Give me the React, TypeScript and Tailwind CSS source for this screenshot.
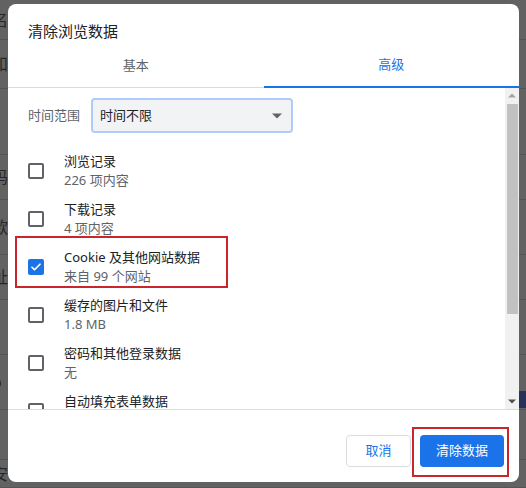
import React from "react";

type Item = { title: string; sub: string; checked?: boolean };

const items: Item[] = [
  { title: "浏览记录", sub: "226 项内容" },
  { title: "下载记录", sub: "4 项内容" },
  { title: "Cookie 及其他网站数据", sub: "来自 99 个网站", checked: true },
  { title: "缓存的图片和文件", sub: "1.8 MB" },
  { title: "密码和其他登录数据", sub: "无" },
  { title: "自动填充表单数据", sub: "" },
];

// rows of the dimmed page behind the dialog
const bgRows = [
  { h: "h-[40px]", text: "名" },
  { h: "h-[49px]", text: "和" },
  { h: "h-[66px]", text: "" },
  { h: "h-[45px]", text: "码" },
  { h: "h-[55px]", text: "款" },
  { h: "h-[45px]", text: "址" },
  { h: "h-[55px]", text: "" },
  { h: "h-[55px]", text: "o", blue: true },
  { h: "h-[50px]", text: "" },
  { h: "h-[28px]", text: "安" },
];

const Checkbox: React.FC<{ checked?: boolean }> = ({ checked }) =>
  checked ? (
    <div className="w-[16px] h-[16px] rounded-[2px] bg-[#1a73e8] flex items-center justify-center shrink-0">
      <svg className="w-[12px] h-[12px]" viewBox="0 0 24 24" fill="none" stroke="white" strokeWidth={3.5} strokeLinecap="round" strokeLinejoin="round">
        <path d="M4 12.5l5 5L20 6.5" />
      </svg>
    </div>
  ) : (
    <div className="w-[16px] h-[16px] rounded-[2px] border-2 border-[#5f6368] shrink-0" />
  );

export default function App() {
  return (
    <div
      className="relative w-[526px] h-[488px] overflow-hidden bg-[#626262]"
      style={{ fontFamily: '"Noto Sans", "Noto Sans CJK SC", sans-serif' }}
    >
      <div className="flex flex-col">
        {bgRows.map((r, i) => (
          <div key={i} className={`${r.h} flex items-center justify-between border-b border-[#555555]`}>
            <span className="-ml-[8px] text-[16px] leading-none text-[#262626]">{r.text}</span>
            {r.blue && <div className="self-end mb-[1px] w-[10px] h-[17px] bg-[#243456]" />}
          </div>
        ))}
      </div>

      <div className="absolute left-[8px] top-[4px] w-[511px] h-[478px] bg-white rounded-[8px] flex flex-col overflow-hidden">
        <div className="h-[40px] pl-[20px] pt-[17px] text-[15px] leading-[20px] text-[#202124]">清除浏览数据</div>

        <div className="flex h-[44px]">
          <div className="flex-1 flex items-center justify-center border-b border-[#dadce0] text-[13px] text-[#5f6368]">基本</div>
          <div className="flex-1 flex items-center justify-center border-b-2 border-[#1a73e8] text-[13px] text-[#1a73e8]">高级</div>
        </div>

        <div className="flex h-[321px]">
          <div className="flex-1 overflow-hidden pl-[20px]">
            <div className="flex items-center mt-[10px]">
              <span className="w-[63px] text-[13px] text-[#5f6368]">时间范围</span>
              <div className="w-[202px] h-[35px] rounded-[4px] border-2 border-[#aecbfa] bg-[#f1f3f4] flex items-center justify-between pl-[7px] pr-[9px]">
                <span className="text-[13px] text-[#202124]">时间不限</span>
                <svg className="w-[10px] h-[6px]" viewBox="0 0 10 5">
                  <path d="M0 0h10L5 5z" fill="#5f6368" />
                </svg>
              </div>
            </div>

            <div className="mt-[14px] flex flex-col">
              {items.map((it) => (
                <div key={it.title} className="h-[48px] flex items-center gap-[20px] shrink-0">
                  <Checkbox checked={it.checked} />
                  <div className="flex flex-col">
                    <span className="text-[13px] leading-[19px] text-[#202124]">{it.title}</span>
                    <span className="h-[19px] text-[13px] leading-[19px] text-[#5f6368]">{it.sub}</span>
                  </div>
                </div>
              ))}
            </div>
          </div>

          <div className="w-[14px] bg-[#f1f1f1] flex flex-col items-center">
            <svg className="mt-[5px] w-[8px] h-[5px]" viewBox="0 0 8 4">
              <path d="M0 4h8L4 0z" fill="#a3a3a3" />
            </svg>
            <div className="mt-[6px] w-[11px] h-[210px] bg-[#c1c1c1]" />
            <div className="flex-1" />
            <svg className="mb-[5px] w-[8px] h-[5px]" viewBox="0 0 8 4">
              <path d="M0 0h8L4 4z" fill="#505050" />
            </svg>
          </div>
        </div>

        <div className="flex-1 border-t border-[#dadce0] flex justify-end items-start gap-[9px] pt-[25px] pr-[15px]">
          <button className="w-[65px] h-[32px] rounded-[4px] border border-[#dadce0] bg-white text-[13px] text-[#1a73e8]">取消</button>
          <button className="w-[84px] h-[32px] rounded-[4px] bg-[#1a73e8] text-[13px] text-white">清除数据</button>
        </div>

        <div className="absolute left-[7px] top-[232px] w-[213px] h-[52px] border-2 border-[#c9252d]" />
        <div className="absolute left-[404px] top-[423px] w-[97px] h-[50px] border-2 border-[#c9252d]" />
      </div>
    </div>
  );
}
